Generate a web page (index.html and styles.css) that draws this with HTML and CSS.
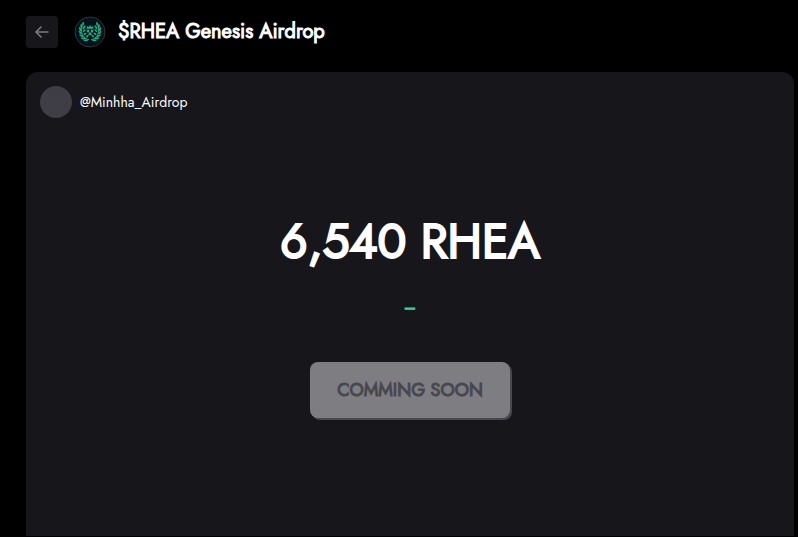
FILE: index.html
```html
<!DOCTYPE html>
<html lang="en">
<head>
  <meta charset="UTF-8">
  <meta name="viewport" content="width=device-width, initial-scale=1">
  <title>$RHEA Genesis Airdrop</title>
  <link rel="stylesheet" href="styles.css">
</head>
<body>
  <div class="page">

    <!-- Top bar -->
    <header class="header">
      <button class="back-btn" type="button" aria-label="Back">
        <svg viewBox="0 0 16 16" xmlns="http://www.w3.org/2000/svg">
          <path d="M14.500 8H2M7.500 2.500L2 8l5.500 5.500"/>
        </svg>
      </button>
      <!-- Laurel wreath logo -->
      <svg class="logo" viewBox="0 0 32 32" xmlns="http://www.w3.org/2000/svg" aria-hidden="true">
        <defs>
          <g id="branch">
            <path class="stem" d="M15 26C9 25 6 20 7 13"/>
            <path d="M8 11Q6 9 8.500 6Q10.500 9 8 11z"/>
            <path d="M7 14Q4 12 6 8.500Q9 11 7 14z"/>
            <path d="M7 17Q3 16 4 12Q7 13 7 17z"/>
            <path d="M7.500 20Q3.500 20 3.500 16Q7 17 7.500 20z"/>
            <path d="M9 23Q5 23.500 4 20Q8 20 9 23z"/>
            <path d="M11.500 25Q8 27 5.500 24Q9 22.500 11.500 25z"/>
            <path d="M14.500 26Q12 29 8.500 27Q11 24.500 14.500 26z"/>
            <path d="M8 15Q8 11 11 10Q11.500 13.500 8 15z"/>
            <path d="M8 18Q8 15 11 14Q11.500 17 8 18z"/>
            <path d="M9 21Q9 18 12 18Q12 21 9 21z"/>
            <path d="M11.500 23.500Q11.500 20.500 14.500 21Q14.500 23.500 11.500 23.500z"/>
          </g>
        </defs>
        <circle class="logo-disc" cx="16" cy="16" r="15"/>
        <g class="logo-mark" transform="translate(1.500 0) scale(0.91)">
          <use href="#branch"/>
          <use href="#branch" transform="translate(32 0) scale(-1 1)"/>
          <path d="M13 11l1.500 1L16 10l1.500 2L19 11l1 3h-8z"/>
          <path d="M12 15h3v3h-2zM17 15h3l-1 3h-2zM15 18h2l1 3h-4z"/>
        </g>
      </svg>
      <h1 class="title">$RHEA Genesis Airdrop</h1>
    </header>

    <!-- Airdrop card -->
    <main class="card">
      <div class="user">
        <div class="avatar"></div>
        <span class="user-name">@Minhha_Airdrop</span>
      </div>
      <div class="claim">
        <p class="amount">6,540 RHEA</p>
        <p class="value">–</p>
        <button class="claim-btn" type="button" disabled>COMMING SOON</button>
      </div>
    </main>

  </div>
</body>
</html>
```

FILE: styles.css
```css
:root {
  --color-page: #000;
  --color-card: #17161b;
  --color-muted: #3f3e47;
  --color-disabled: #7e7d82;
  --color-green: #34d399;
  --color-text: #fff;
  --font-family: Jost, Lato, sans-serif;
}

* {
  box-sizing: border-box;
  margin: 0;
  padding: 0;
}
body {
  background: var(--color-page);
  color: var(--color-text);
  font-family: var(--font-family);
}
.page {
  display: flex;
  flex-direction: column;
  gap: 24px;
  min-height: 100vh;
  padding: 16px 4px 1px 26px;
}

/* === Top bar === */
.header {
  display: flex;
  align-items: center;
}
.back-btn {
  display: flex;
  align-items: center;
  justify-content: center;
  width: 32px;
  height: 32px;
  margin-right: 16px;
  background: var(--color-card);
  border: none;
  border-radius: 4px;
  cursor: pointer;
}
.back-btn svg {
  width: 16px;
  height: 16px;
  fill: none;
  stroke: #7b7a80;
  stroke-width: 1.5;
}
.logo {
  width: 32px;
  height: 32px;
  margin-right: 12px;
}
.logo-disc {
  fill: #06121a;
  stroke: #34343c;
  stroke-width: 1;
}
.logo-mark {
  fill: #1fae83;
}
.stem {
  fill: none;
  stroke: #1fae83;
  stroke-width: 1;
}
.title {
  font-size: 20px;
  font-weight: 400;
  line-height: 32px;
  -webkit-text-stroke: 1px;
}

/* === Card === */
.card {
  flex: 1;
  display: flex;
  flex-direction: column;
  padding: 14px;
  background: var(--color-card);
  border-radius: 12px 12px 0 0;
}
.user {
  display: flex;
  align-items: center;
  gap: 8px;
}
.avatar {
  width: 32px;
  height: 32px;
  background: var(--color-muted);
  border-radius: 50%;
}
.user-name {
  font-size: 14px;
  line-height: 20px;
}

/* === Amount and claim button === */
.claim {
  display: flex;
  flex-direction: column;
  align-items: center;
  padding: 88px 0 104px;
}
.amount {
  font-size: 48px;
  font-weight: 400;
  line-height: 72px;
  -webkit-text-stroke: 2px;
}
.value {
  margin-top: 18px;
  color: var(--color-green);
  font-size: 16px;
  line-height: 24px;
  -webkit-text-stroke: 1px;
}
.claim-btn {
  width: 200px;
  height: 56px;
  margin-top: 42px;
  background: var(--color-disabled);
  border: none;
  border-radius: 8px;
  box-shadow: 2px 2px 0 #48474e;
  color: #48474f;
  font-family: inherit;
  font-size: 18px;
  font-weight: 400;
  -webkit-text-stroke: 1px;
}
```
